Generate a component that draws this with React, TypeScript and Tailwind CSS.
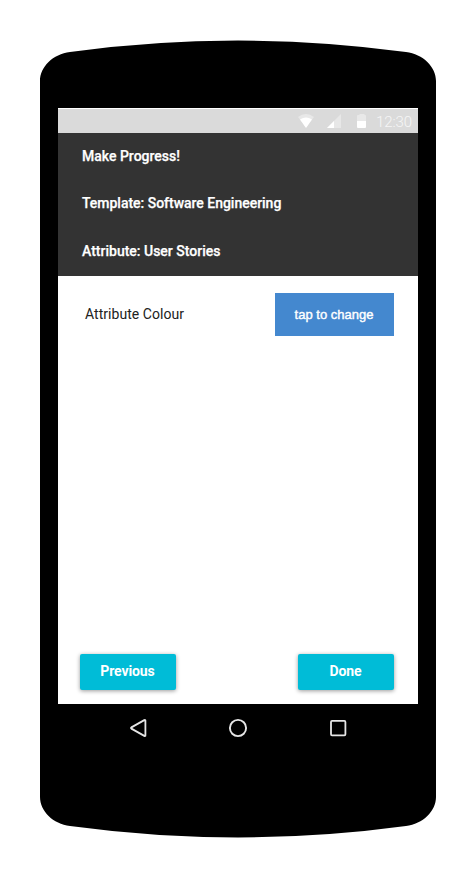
function Cap({ flip = false }: { flip?: boolean }) {
  return (
    <svg
      className={flip ? "block h-[41px] w-[396px] rotate-180" : "block h-[41px] w-[396px]"}
      viewBox="0 0 396 41"
      aria-hidden="true"
    >
      <path d="M0 41C0 27 13 14 30 12Q114 0.6 198 0.6T366 12C383 14 396 27 396 41Z" fill="#000" />
    </svg>
  );
}

function StatusBar() {
  return (
    <div className="flex h-[25px] items-center justify-end border-t border-white bg-[#dadada] pr-[6px]">
      <svg className="h-6 w-[72px]" viewBox="0 0 72 24" aria-hidden="true">
        <path d="M0 8Q8 2 16 8L8 18.5Z" fill="#e8e8e8" />
        <path d="M2 10.5Q8 6.5 14 10.5L8 19Z" fill="#fff" />
        <path d="M29 19L43 5V19Z" fill="#e7e7e7" />
        <path d="M29 19L36 12V19Z" fill="#fff" />
        <path d="M59 7Q59 6 60 6H61.5V5H66.5V6H67Q68 6 68 7V12H59Z" fill="#e8e8e8" />
        <path d="M59 12H68V18Q68 19 67 19H60Q59 19 59 18Z" fill="#fff" />
      </svg>
      <span className="ml-[6px] w-[36px] whitespace-nowrap pt-[2px] text-[15px] leading-6 font-light tracking-[-0.1px] text-[#f6f6f6]">12:30</span>
    </div>
  );
}

function ActionButton({ label }: { label: string }) {
  return (
    <button className="h-9 w-24 rounded-[2px] bg-[#00bcd7] pr-px pb-[2px] text-sm font-bold tracking-[-0.1px] text-white shadow-[0_1px_4px_rgba(0,0,0,0.4)]">
      {label}
    </button>
  );
}

function NavigationBar() {
  return (
    <nav className="flex h-12 items-center justify-center gap-[76px]">
      <svg className="size-6" viewBox="0 0 24 24" fill="none" stroke="#e6e6e6" strokeWidth="1.8" strokeLinejoin="round" aria-hidden="true">
        <path d="M5.4 11.4L18.3 4.1Q19.4 3.6 19.4 4.6V19.4Q19.4 20.4 18.3 19.9L5.4 12.6Q4.6 12 5.4 11.4Z" />
      </svg>
      <svg className="size-6" viewBox="0 0 24 24" fill="none" stroke="#e6e6e6" strokeWidth="1.9" aria-hidden="true">
        <circle cx="12" cy="12" r="8.1" />
      </svg>
      <svg className="size-6" viewBox="0 0 24 24" fill="none" stroke="#e6e6e6" strokeWidth="1.8" aria-hidden="true">
        <rect x="5" y="4.9" width="14.4" height="14.4" rx="1" />
      </svg>
    </nav>
  );
}

export default function App() {
  return (
    <div className="flex h-[878px] w-[476px] flex-col items-center bg-white pt-10 font-['Roboto',sans-serif]">
      <Cap />
      <div className="flex h-[716px] w-[396px] flex-col bg-black px-[18px] pt-[27px]">
        <main className="flex h-[596px] flex-col bg-white">
          <StatusBar />
          <header className="flex h-[143px] flex-col bg-[#333] pl-6 text-sm font-medium text-white [-webkit-text-stroke:0.25px_white]">
            <h1 className="h-[47px] leading-[46px]">Make Progress!</h1>
            <p className="h-12 tracking-[-0.02px] leading-[47px]">Template: Software Engineering</p>
            <p className="h-12 leading-[47px]">Attribute: User Stories</p>
          </header>
          <section className="mt-[17px] flex items-center justify-between pr-6 pl-[27px]">
            <span className="pb-[2px] text-sm tracking-[0.04px] text-[#212121]">Attribute Colour</span>
            <button className="h-[43px] w-[119px] bg-[#4488cf] pr-px font-['Liberation_Sans',sans-serif] text-[13px] text-white [-webkit-text-stroke:0.4px_white]">
              tap to change
            </button>
          </section>
          <footer className="mt-auto mb-[14px] flex justify-between pr-6 pl-[22px]">
            <ActionButton label="Previous" />
            <ActionButton label="Done" />
          </footer>
        </main>
        <NavigationBar />
      </div>
      <Cap flip />
    </div>
  );
}
